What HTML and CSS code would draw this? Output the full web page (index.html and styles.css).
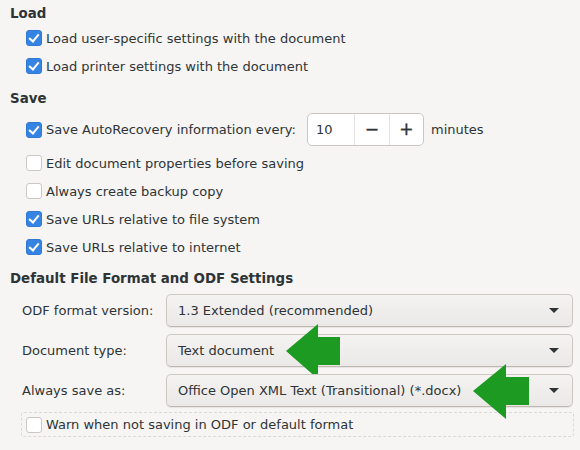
FILE: index.html
```html
<!DOCTYPE html>
<html>
<head>
<meta charset="utf-8">
<link rel="stylesheet" href="styles.css">
</head>
<body>
<div class="page">
  <div class="heading h-load">Load</div>
  <div class="row"><span class="cb on"></span><span>Load user-specific settings with the document</span></div>
  <div class="row"><span class="cb on"></span><span>Load printer settings with the document</span></div>

  <div class="heading h-save">Save</div>
  <div class="spin-row">
    <span class="cb on"></span><span>Save AutoRecovery information every:</span>
    <div class="spin">
      <span class="spin-val">10</span>
      <span class="spin-btn">&minus;</span>
      <span class="spin-btn">+</span>
    </div>
    <span class="unit">minutes</span>
  </div>
  <div class="row"><span class="cb"></span><span>Edit document properties before saving</span></div>
  <div class="row"><span class="cb"></span><span>Always create backup copy</span></div>
  <div class="row"><span class="cb on"></span><span>Save URLs relative to file system</span></div>
  <div class="row"><span class="cb on"></span><span>Save URLs relative to internet</span></div>

  <div class="heading h-def">Default File Format and ODF Settings</div>
  <div class="grid">
    <div class="lbl">ODF format version:</div>
    <div class="combo"><span>1.3 Extended (recommended)</span><span class="tri"></span></div>
    <div class="lbl">Document type:</div>
    <div class="combo"><span>Text document</span><span class="tri"></span>
      <svg class="arrow a1" width="54" height="56" viewBox="0 0 54 56"><path d="M0 27 L32 0 L32 13 L54 13 L54 41 L32 41 L32 55 Z" fill="#1d9a22"/></svg>
    </div>
    <div class="lbl">Always save as:</div>
    <div class="combo"><span>Office Open XML Text (Transitional) (*.docx)</span><span class="tri"></span>
      <svg class="arrow a2" width="56" height="56" viewBox="0 0 56 56"><path d="M0 27 L33 0 L33 13 L56 13 L56 41 L33 41 L33 55 Z" fill="#1d9a22"/></svg>
    </div>
  </div>
  <div class="warn"><span class="cb"></span><span>Warn when not saving in ODF or default format</span></div>
</div>
</body>
</html>
```
FILE: styles.css
```css
* { box-sizing: border-box; }
html, body { margin: 0; padding: 0; }
body {
  background: #f6f5f4;
  color: #2e3436;
  font-family: "DejaVu Sans", sans-serif;
  font-size: 13px;
  width: 580px;
  height: 450px;
  overflow: hidden;
}
.page { padding-top: 4px; }
.heading {
  font-weight: bold;
  font-size: 13.4px;
  height: 20px;
  line-height: 20px;
  padding-left: 10px;
}
.h-save { margin-top: 9px; }
.h-def { margin-top: 8px; }
.row {
  height: 28px;
  display: flex;
  align-items: center;
  padding-left: 26px;
  gap: 4px;
}
.cb {
  width: 16px;
  height: 16px;
  border-radius: 3px;
  border: 1px solid #cdc7c2;
  background: #fff;
  flex: none;
  position: relative;
}
.cb.on {
  background: #3584e4;
  border-color: #2f78d3;
}
.cb.on::after {
  content: "";
  position: absolute;
  left: 4px;
  top: 1px;
  width: 4px;
  height: 8px;
  border: solid #fff;
  border-width: 0 2.2px 2.2px 0;
  transform: rotate(40deg);
}
.spin-row {
  margin-top: 4px;
  height: 33px;
  display: flex;
  align-items: center;
  padding-left: 26px;
  gap: 4px;
  margin-bottom: 3px;
}
.spin {
  margin-left: 7px;
  display: flex;
  height: 33px;
  width: 117px;
  background: #fff;
  border: 1px solid #cdc7c2;
  border-radius: 5px;
}
.spin-val {
  width: 47px;
  padding-left: 8px;
  line-height: 31px;
}
.spin-btn {
  width: 35px;
  border-left: 1px solid #e6e3e0;
  text-align: center;
  line-height: 31px;
  font-size: 17px;
  color: #2e3436;
  -webkit-text-stroke: 0.4px #2e3436;
}
.unit { margin-left: 3px; }
.grid {
  margin-top: 5px;
  display: grid;
  grid-template-columns: 144px 407px;
  row-gap: 7px;
  padding-left: 22px;
}
.lbl {
  display: flex;
  align-items: center;
  height: 33px;
}
.combo {
  position: relative;
  height: 33px;
  display: flex;
  align-items: center;
  justify-content: space-between;
  padding: 0 13px 0 11px;
  border: 1px solid #cdc7c2;
  border-bottom-color: #bfb8b1;
  border-radius: 5px;
  background: linear-gradient(#f4f3f2, #ebe9e7);
  box-shadow: 0 1px 1px rgba(0,0,0,0.07);
}
.tri {
  width: 0;
  height: 0;
  border-left: 5px solid transparent;
  border-right: 5px solid transparent;
  border-top: 5px solid #2e3436;
}
.arrow {
  position: absolute;
  top: -11px;
}
.a1 { left: 119px; }
.a2 { left: 306px; }
.warn {
  margin: 5px 6px 0 21px;
  height: 25px;
  display: flex;
  align-items: center;
  gap: 4px;
  padding-left: 4px;
  border: 1px dashed #dcd8d4;
  border-radius: 3px;
}
```
